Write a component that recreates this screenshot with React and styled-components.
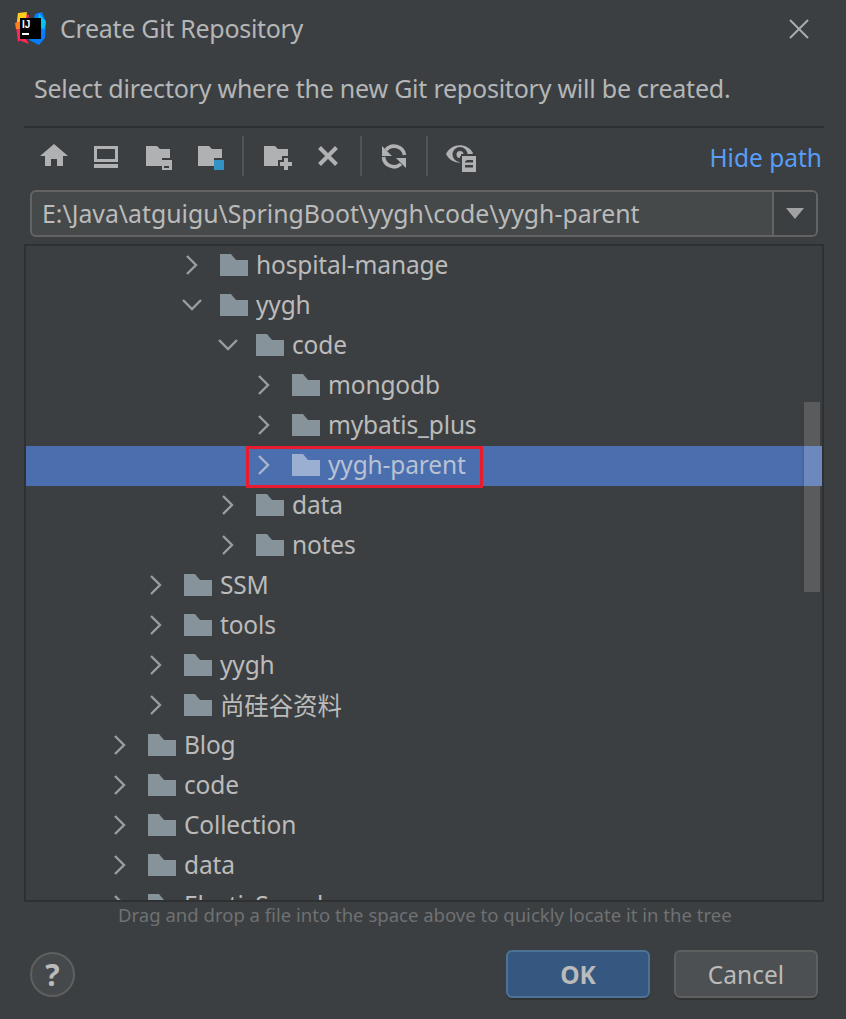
import React from "react";
import styled, { createGlobalStyle } from "styled-components";

const Global = createGlobalStyle`
  html, body { margin: 0; padding: 0; background: #3c3f41; }
  * { box-sizing: border-box; }
`;

const FONT = `"Noto Sans", "Noto Sans CJK SC", sans-serif`;

const Dialog = styled.div`
  width: 846px;
  height: 1019px;
  background: #3c3f41;
  color: #bbbbbb;
  font-family: ${FONT};
  display: flex;
  flex-direction: column;
  overflow: hidden;
`;
const TitleBar = styled.header`
  height: 58px;
  display: flex;
  align-items: center;
  padding: 0 36px 0 15px;
  gap: 13px;
`;
const Title = styled.h1`
  flex: 1;
  margin: 0 0 2px;
  font-size: 25px;
  font-weight: 400;
  color: #b4b6b7;
  letter-spacing: -0.3px;
`;
const Description = styled.p`
  margin: 0;
  height: 68px;
  padding: 12px 0 0 34px;
  font-size: 25px;
  line-height: 36px;
  color: #b4b6b7;
  letter-spacing: -0.23px;
`;
const Content = styled.div`
  margin: 0 22px 0 24px;
  display: flex;
  flex-direction: column;
`;
const Toolbar = styled.div`
  height: 64px;
  border-top: 2px solid #2f3032;
  display: flex;
  align-items: center;
  gap: 16px;
  padding: 0 2px 10px 14px;
`;
const ToolGroup = styled.div`
  display: flex;
  gap: 20px;
`;
const ToolIcon = styled.svg`
  width: 32px;
  height: 32px;
  display: block;
  flex: none;
  overflow: visible;
  fill: #afb1b3;
`;
const ToolSep = styled.span`
  width: 2px;
  height: 40px;
  margin-top: 4px;
  background: #515354;
`;
const HidePath = styled.a`
  margin: 7px 0 0 auto;
  font-size: 24.5px;
  color: #589df6;
`;
const PathField = styled.div`
  margin: 0 6px;
  height: 47px;
  display: flex;
  border: 2px solid #646464;
  border-radius: 6px;
  overflow: hidden;
  background: #45494a;
`;
const PathText = styled.div`
  flex: 1;
  padding-left: 10px;
  font-size: 24.8px;
  line-height: 43px;
  color: #bbbbbb;
`;
const Dropdown = styled.div`
  width: 44px;
  border-left: 2px solid #646464;
  background: #3c3f41;
  display: flex;
  align-items: center;
  justify-content: center;
  &::after {
    content: "";
    border-left: 9px solid transparent;
    border-right: 9px solid transparent;
    border-top: 11px solid #a0a2a4;
  }
`;
const Tree = styled.div`
  position: relative;
  margin-top: 7px;
  height: 658px;
  border: 2px solid #2f3032;
  overflow: hidden;
`;
const ScrollThumb = styled.div`
  position: absolute;
  top: 156px;
  right: 2px;
  width: 16px;
  height: 190px;
  background: #5a5b5c;
`;
const Row = styled.div`
  position: relative;
  height: 40px;
  display: flex;
  align-items: center;
  padding-bottom: 2px;
  padding-left: ${(p) => 84 + 36 * p.$level}px;
  background: ${(p) => (p.$selected ? "#4b6eaf" : "transparent")};
  font-size: 24.5px;
  letter-spacing: -0.15px;
  color: ${(p) => (p.$selected ? "#b9c2d2" : "#bbbbbb")};
`;
const RowLabel = styled.span`
  padding-bottom: 2px;
`;
const Arrow = styled.svg`
  width: 20px;
  height: 20px;
  flex: none;
  fill: none;
  stroke: ${(p) => (p.$selected ? "#a9b6cf" : "#9a9da0")};
  stroke-width: 2.4;
`;
const Folder = styled.svg`
  width: 28px;
  height: 22px;
  flex: none;
  margin: 0 8px 0 18px;
  fill: ${(p) => (p.$selected ? "#9bafd2" : "#87939a")};
`;
const SelectedScroll = styled.span`
  position: absolute;
  top: 0;
  right: 0;
  width: 20px;
  height: 40px;
  background: #6d88bd;
  border-left: 2px solid #4a669f;
`;
const Annotation = styled.span`
  position: absolute;
  left: 220px;
  top: 0;
  width: 237px;
  height: 42px;
  border: 3px solid #e81c2e;
`;
const Hint = styled.div`
  height: 48px;
  padding: 0 0 0 94px;
  font-size: 18.55px;
  line-height: 26px;
  color: #6f7173;
`;
const Footer = styled.footer`
  display: flex;
  align-items: center;
  padding: 0 28px 0 30px;
  gap: 24px;
`;
const Help = styled.button`
  width: 45px;
  height: 45px;
  margin-right: auto;
  border-radius: 50%;
  border: 2px solid #5e6060;
  background: #46494b;
  color: #bbbbbb;
  font: 700 30px ${FONT};
  padding: 0;
`;
const Button = styled.button`
  width: 144px;
  height: 48px;
  border-radius: 6px;
  border: 2px solid ${(p) => (p.$primary ? "#4c7396" : "#5e6060")};
  background: ${(p) => (p.$primary ? "#365880" : "#4c5052")};
  color: #bbbbbb;
  box-shadow: 0 2px 0 rgba(0, 0, 0, 0.18);
  font: ${(p) => (p.$primary ? 700 : 400)} 24.5px ${FONT};
  padding: 0;
`;

const Logo = () => (
  <svg width="32" height="34" viewBox="0 0 32 34">
    <polygon points="3,1 14,3 10,24 3,30 1,14" fill="#fe2857" />
    <polygon points="3,1 12,0 10,12 2,10" fill="#ffcd1c" />
    <polygon points="0,11 6,9 6,17 1,17" fill="#fc801d" />
    <polygon points="20,2 27,0 31,10 30,26 24,33 14,28" fill="#087cfa" />
    <polygon points="24,1 31,10 29,18 22,12" fill="#07c3f2" />
    <polygon points="2,26 8,22 14,32 6,29" fill="#fe2857" />
    <rect x="5" y="6" width="21" height="21" fill="#000" />
    <text x="7" y="15.5" fill="#fff" fontFamily="Liberation Sans" fontWeight="700" fontSize="10">IJ</text>
    <rect x="7" y="21" width="7" height="2" fill="#fff" />
  </svg>
);

const Close = () => (
  <svg width="22" height="22" viewBox="0 0 22 22" stroke="#a9abad" strokeWidth="2" fill="none">
    <path d="M2 2 L20 20 M20 2 L2 20" />
  </svg>
);

const folderWithSlot = "M4 8 H15 L18 11 H28 V20 H20 V28 H4 Z";

const Icons = {
  home: <path d="M16 6 L30 18 H25 V28 H19 V21 H13 V28 H7 V18 H2 Z" />,
  laptop: (
    <>
      <path fillRule="evenodd" d="M4 8 H28 V24 H4 Z M7 11 V21 H25 V11 Z" />
      <rect x="4" y="26" width="24" height="4" />
    </>
  ),
  module: (
    <>
      <path d={folderWithSlot} />
      <path fillRule="evenodd" d="M20 22 H30 V32 H20 Z M22 28 V30 H27 V28 Z" />
    </>
  ),
  project: (
    <>
      <path d={folderWithSlot} />
      <rect x="20" y="22" width="10" height="10" fill="#3592c4" />
    </>
  ),
  newFolder: (
    <>
      <path d="M4 8 H15 L18 11 H28 V18 H22 V22 H18 V28 H4 Z" />
      <path d="M24 20 H28 V24 H32 V28 H28 V32 H24 V28 H20 V24 H24 Z" />
    </>
  ),
  close: (
    <path d="M7.5 9.5 L24.5 26.5 M24.5 9.5 L7.5 26.5" stroke="#afb1b3" strokeWidth="4" fill="none" />
  ),
  refresh: (
    <>
      <path d="M8 12 A10.5 10.5 0 0 1 26.5 17" stroke="#afb1b3" strokeWidth="3.6" fill="none" />
      <path d="M5.5 19 A10.5 10.5 0 0 0 23 26" stroke="#afb1b3" strokeWidth="3.6" fill="none" />
      <path d="M4 8 V18 H14 Z M28 30 V20 H18 Z" />
    </>
  ),
  eye: (
    <>
      <path
        fillRule="evenodd"
        d="M2 16 C7 5 23 4 29 15 C24 27 8 28 2 16 Z M16 9 A7.5 7.5 0 1 0 16 24 A7.5 7.5 0 1 0 16 9 Z"
      />
      <circle cx="16" cy="16.5" r="3.5" />
      <path
        fillRule="evenodd"
        d="M18 18 H32 V34 H18 Z M21 22 V24.5 H29 V22 Z M21 27 V29.5 H29 V27 Z"
        stroke="#3c3f41"
        strokeWidth="0"
      />
      <path d="M17 18 V34 M17 17 H33" stroke="#3c3f41" strokeWidth="2" fill="none" />
    </>
  ),
};

const Tool = ({ name }) => (
  <ToolIcon viewBox="0 0 32 32">{Icons[name]}</ToolIcon>
);

const rows = [
  ["hospital-manage", 2],
  ["yygh", 2, true],
  ["code", 3, true],
  ["mongodb", 4],
  ["mybatis_plus", 4],
  ["yygh-parent", 4, false, true],
  ["data", 3],
  ["notes", 3],
  ["SSM", 1],
  ["tools", 1],
  ["yygh", 1],
  ["尚硅谷资料", 1],
  ["Blog", 0],
  ["code", 0],
  ["Collection", 0],
  ["data", 0],
  ["ElasticSearch", 0],
];

export default function App() {
  return (
    <Dialog>
      <Global />
      <TitleBar>
        <Logo />
        <Title>Create Git Repository</Title>
        <Close />
      </TitleBar>
      <Description>Select directory where the new Git repository will be created.</Description>
      <Content>
        <Toolbar>
          <ToolGroup>
            <Tool name="home" />
            <Tool name="laptop" />
            <Tool name="module" />
            <Tool name="project" />
          </ToolGroup>
          <ToolSep />
          <ToolGroup>
            <Tool name="newFolder" />
            <Tool name="close" />
          </ToolGroup>
          <ToolSep />
          <Tool name="refresh" />
          <ToolSep />
          <Tool name="eye" />
          <HidePath>Hide path</HidePath>
        </Toolbar>
        <PathField>
          <PathText>E:\Java\atguigu\SpringBoot\yygh\code\yygh-parent</PathText>
          <Dropdown />
        </PathField>
        <Tree>
          <ScrollThumb />
          {rows.map(([label, level, open, selected]) => (
            <Row key={label + level} $level={level} $selected={selected}>
              <Arrow viewBox="0 0 20 20" $selected={selected}>
                <path d={open ? "M1 5 L10 14 L19 5" : "M5 1 L14 10 L5 19"} />
              </Arrow>
              <Folder viewBox="0 0 28 22" $selected={selected}>
                <path d="M0 0 H11 L16 6 H28 V22 H0 Z" />
              </Folder>
              <RowLabel>{label}</RowLabel>
              {selected && <SelectedScroll />}
              {selected && <Annotation />}
            </Row>
          ))}
        </Tree>
        <Hint>Drag and drop a file into the space above to quickly locate it in the tree</Hint>
      </Content>
      <Footer>
        <Help>?</Help>
        <Button $primary>OK</Button>
        <Button>Cancel</Button>
      </Footer>
    </Dialog>
  );
}
